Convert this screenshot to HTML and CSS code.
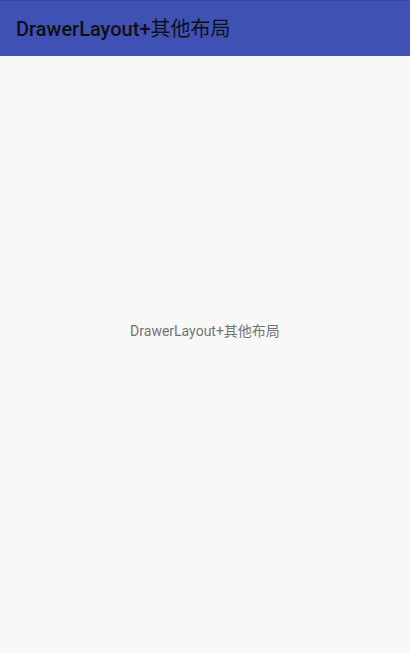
FILE: index.html
```html
<!DOCTYPE html>
<html>
<head>
<meta charset="utf-8">
<link rel="stylesheet" href="styles.css">
</head>
<body>
<div class="app">
  <header class="toolbar">
    <h1 class="title">DrawerLayout+<span class="cjk">其他布局</span></h1>
  </header>
  <main class="content">
    <p class="label">DrawerLayout+其他布局</p>
  </main>
</div>
</body>
</html>
```

FILE: styles.css
```css
html, body {
  margin: 0;
  padding: 0;
  height: 100%;
}
body {
  background: #f8f8f8;
  font-family: Roboto, "Noto Sans CJK SC", sans-serif;
}
.app {
  display: flex;
  flex-direction: column;
  height: 100%;
}
.toolbar {
  height: 56px;
  background: #3f51b5;
  border-top: 1px solid #3949a0;
  box-sizing: border-box;
  display: flex;
  align-items: center;
  padding: 0 16px;
  flex-shrink: 0;
}
.title {
  margin: 0;
  font-size: 20px;
  font-weight: 500;
  color: #101010;
  line-height: 1;
}
.cjk {
  font-weight: 400;
}
.content {
  flex: 1;
  display: flex;
  align-items: center;
  justify-content: center;
  padding-bottom: 49px;
}
.label {
  margin: 0;
  font-size: 14px;
  color: #737373;
}
```
